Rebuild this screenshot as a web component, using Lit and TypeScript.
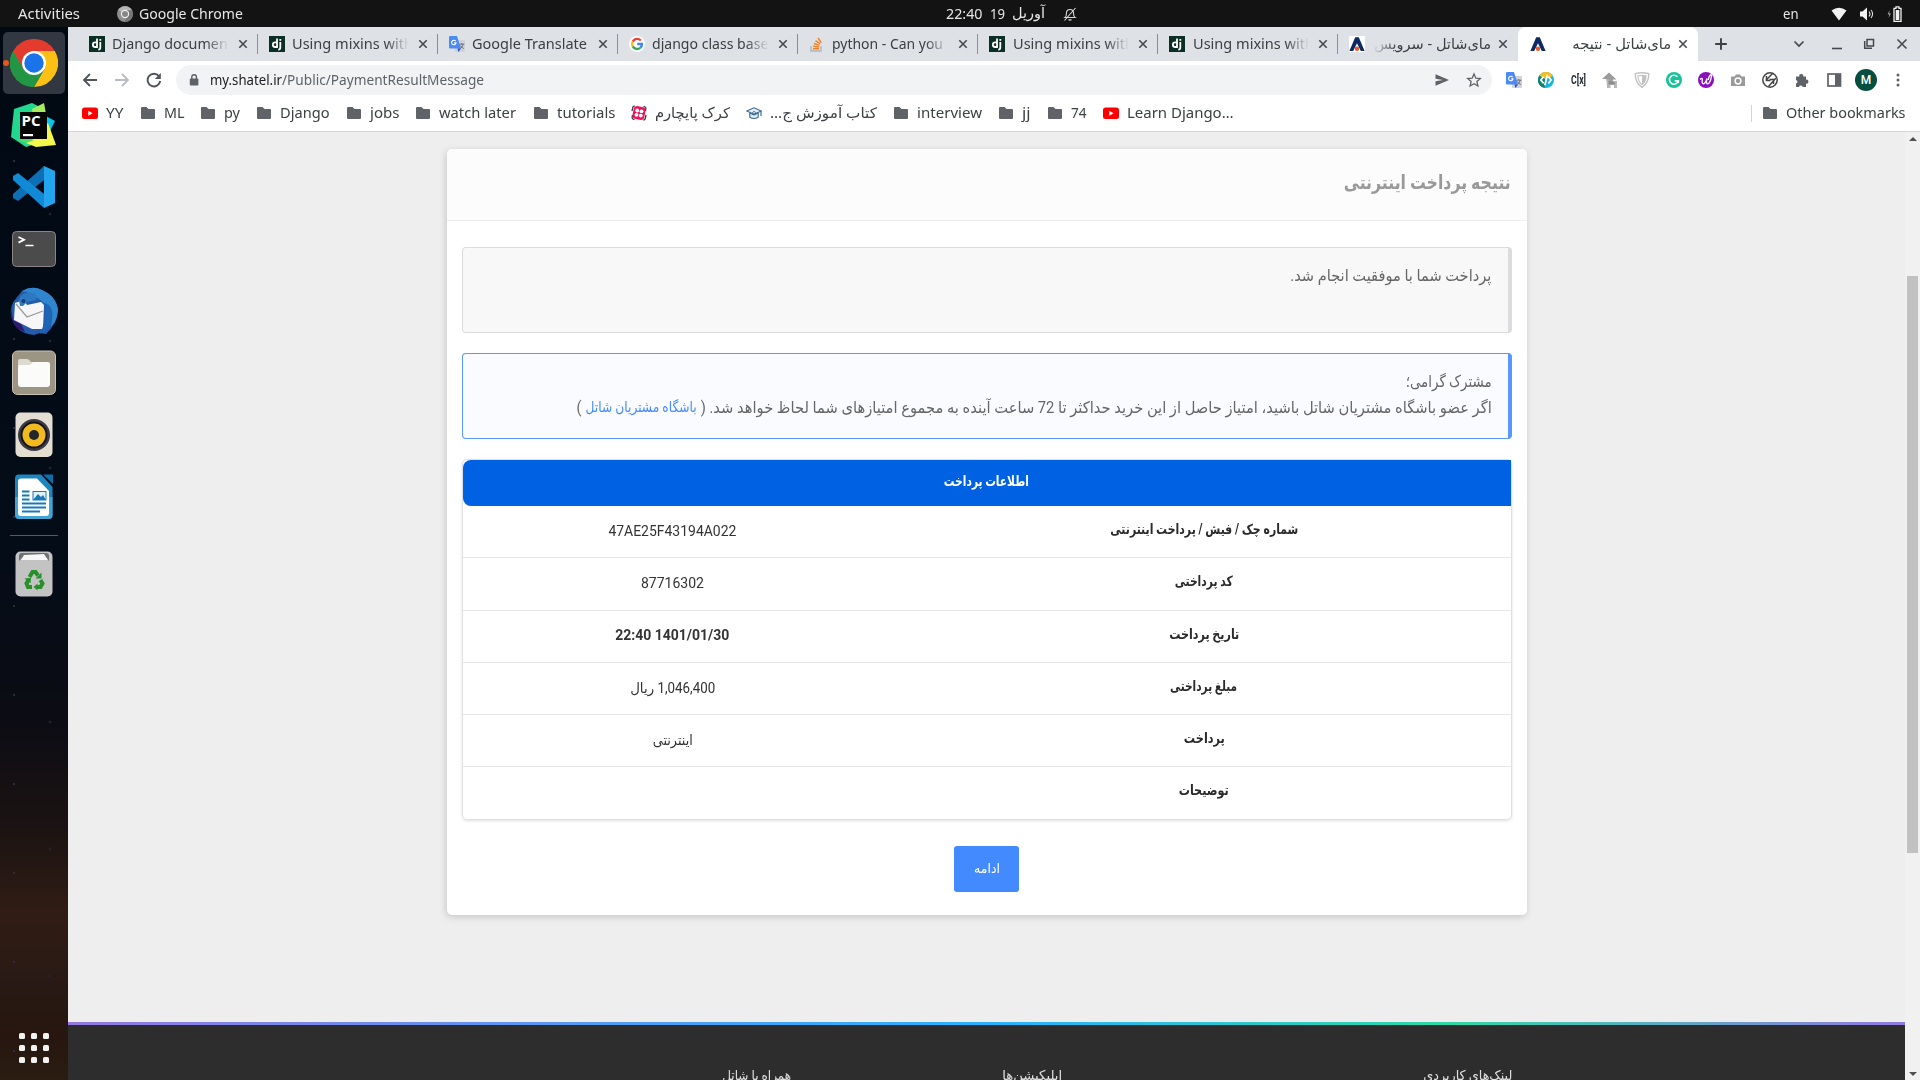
import { LitElement, html, svg, css, nothing } from "lit";
import { customElement } from "lit/decorators.js";
import { styleMap } from "lit/directives/style-map.js";

/** Text laid out in a box of a known width; the glyph run is scaled to fill it. */
@customElement("fit-text")
class FitText extends LitElement {
  static properties = { w: { type: Number }, rtl: { type: Boolean } };
  declare w: number;
  declare rtl: boolean;
  static styles = css`
    :host { display: block; flex: none; white-space: nowrap; }
    .box { display: flex; }
    .run { display: block; flex: none; transform-origin: left center; }
    .rtl { direction: rtl; }
    .rtl .run { transform-origin: right center; }
  `;
  firstUpdated() {
    const run = this.renderRoot.querySelector(".run") as HTMLElement;
    const natural = run.getBoundingClientRect().width;
    if (natural > 0) run.style.transform = `scaleX(${this.w / natural})`;
  }
  render() {
    return html`<div class="box ${this.rtl ? "rtl" : ""}" style=${styleMap({ width: this.w + "px" })}>
      <span class="run"><slot></slot></span></div>`;
  }
}

const fit = (text: string, w: number, rtl = false) => html`<fit-text .w=${w} .rtl=${rtl}>${text}</fit-text>`;
const icon = (body: unknown, size = 16, box = 16) =>
  html`<svg class="ic" width=${size} height=${size} viewBox="0 0 ${box} ${box}">${body}</svg>`;

/* favicons */
const dj = icon(svg`<rect width="16" height="16" fill="#0c2f24"/><g fill="none" stroke="#fff" stroke-width="1.8"><path d="M8 2.6V11H6.2a2.3 2.3 0 0 1 0-4.6H8"/><path d="M11.3 6v5.4q0 2-2 2.2"/></g><rect x="10.4" y="3" width="1.8" height="1.8" fill="#fff"/>`);
const translate = icon(svg`<rect x="6" y="4" width="10" height="12" rx="1" fill="#cfd3d8"/><path d="M1 0h7l4 12.500H1a1 1 0 0 1-1-1V1a1 1 0 0 1 1-1z" fill="#4a8af4"/><path d="M8.500 12.500H12L9.500 16z" fill="#2a4fc4"/><path d="M6.600 5.200A2.200 2.200 0 1 0 7 6.900H5.200" fill="none" stroke="#fff" stroke-width="1.100"/><path d="M10.500 8.200h4.800M12.800 7v1.200M14.300 8.300q-.8 2.800-3 4.300M11.600 9.600q1 2 3.200 3" stroke="#667" stroke-width=".9" fill="none"/>`);
const google = icon(svg`<circle cx="8" cy="8" r="8" fill="#fff"/><g fill="none" stroke-width="2.300"><path d="M11.800 4.500A5 5 0 0 0 3.700 5.600" stroke="#ea4335"/><path d="M3.700 5.600a5 5 0 0 0 0 4.800" stroke="#fbbc05"/><path d="M3.700 10.400a5 5 0 0 0 7.600 1.400" stroke="#34a853"/><path d="M11.300 11.800A5 5 0 0 0 13 8H8.200" stroke="#4285f4"/></g>`);
const stack = icon(svg`<path d="M2 10v5h10v-5" fill="none" stroke="#b3b5b8" stroke-width="1.400"/><g stroke="#f48024" stroke-width="1.400"><path d="M4 12.700h6M4.100 10.300l5.900.7M4.900 7.500l5.500 1.900M6.500 4.600l4.700 3.300M9 2l3.300 4.600"/></g>`);
const shatel = (bg: boolean) => icon(svg`${bg ? svg`<rect width="16" height="16" fill="#fff"/>` : nothing}<path d="M6.200 1.200h3.600L15.600 15h-3.800L8 7.200 4.200 15H.4z" fill="#0d2a63"/><circle cx="8" cy="12.800" r="2.200" fill="#f15a24"/>`);
const cross = icon(svg`<path d="M4.300 4.300l7.400 7.400M11.700 4.300l-7.400 7.400" stroke="#45494d" stroke-width="1.600"/>`);

/* bookmarks */
const folder = icon(svg`<path d="M1 3a1 1 0 0 1 1-1h4.500l2 2H14a1 1 0 0 1 1 1v8a1 1 0 0 1-1 1H2a1 1 0 0 1-1-1z" fill="#5f6368"/>`);
const youtube = icon(svg`<rect y="2.500" width="16" height="11.500" rx="2.500" fill="#f00"/><path d="M6.300 5.800v5L10.600 8.300z" fill="#fff"/>`);
const aparat = icon(svg`<g fill="none" stroke="#3b3b44" stroke-width="1.300"><path d="M1 6L1.800 2.500q.4-1.600 2-1.300M12.500 1.400q2.800.6 2.300 2.600L14.500 6M15 10l-.8 3.500q-.4 1.600-2 1.300M3.500 14.600Q.7 14 1.200 12L1.500 10"/></g><rect x="2" y="1.500" width="12" height="13" rx="4" transform="rotate(12 8 8)" fill="#ed145b"/><g fill="#fff"><circle cx="6.200" cy="5.500" r="1.900"/><circle cx="10.500" cy="6.300" r="1.900"/><circle cx="5.500" cy="9.800" r="1.900"/><circle cx="9.800" cy="10.600" r="1.900"/></g>`);
const cap = icon(svg`<path d="M.8 6L8 2.800 15.200 6 8 9.200z" fill="#e8f1f8" stroke="#3a6b96" stroke-width="1.100"/><path d="M3.800 8v4.200q4.200 2.600 8.400 0V8L8 9.800z" fill="#dce9f3" stroke="#3a6b96" stroke-width="1.100"/><path d="M15 6v5" stroke="#3a6b96" stroke-width="1.200"/><circle cx="8" cy="8" r="1.500" fill="none" stroke="#3a6b96" stroke-width=".8"/>`);

/* toolbar */
const back = icon(svg`<path d="M15 8H2M8 2L2 8l6 6" fill="none" stroke="#50545a" stroke-width="1.800"/>`);
const fwd = icon(svg`<path d="M1 8h13M8 2l6 6-6 6" fill="none" stroke="#b9bbbe" stroke-width="1.800"/>`);
const reload = icon(svg`<path d="M13 4.300A6.300 6.300 0 1 0 14.200 9" fill="none" stroke="#50545a" stroke-width="1.900"/><path d="M14.800 1v6h-6z" fill="#50545a"/>`);
const lock = icon(svg`<rect x="3.800" y="6.500" width="8.600" height="7" rx="1" fill="#5f6368"/><path d="M5.800 7V5a2.300 2.300 0 0 1 4.600 0v2" fill="none" stroke="#5f6368" stroke-width="1.400"/>`);
const send = icon(svg`<path d="M1.500 2.300L15 8 1.500 13.700V9.200L9 8 1.500 6.800z" fill="#5f6368"/>`);
const star = icon(svg`<path d="M8 2l1.800 4.200 4.500.4-3.400 3 1 4.400L8 11.700 4.100 14l1-4.400-3.400-3 4.500-.4z" fill="none" stroke="#5f6368" stroke-width="1.300"/>`);
const ring = icon(svg`<circle cx="8" cy="8" r="8" fill="#18b6de"/><path d="M1 4A8 8 0 0 1 15 4L8 7z" fill="#f8bd1d"/><path d="M1.300 3.600A8 8 0 0 0 6.500 15.900L8 8z" fill="#12806f"/><path d="M5.600 4.600L2.900 8l2.700 3.400M10.400 4.600L13.100 8l-2.700 3.400M9.300 2.800L6.800 13.200" stroke="#fff" stroke-width="1.700" fill="none"/>`);
const home = icon(svg`<path d="M7 .5L14.500 7.500H11V9H4.500V7H0z" fill="#9c9c9c"/><path d="M4.500 7l8 2h2.500v7h-3v-3H8.500v3H5z" fill="#b8b8b8"/><path d="M6.500 8.500h3l3.500 2.500v1.500H6.500z" fill="#8c8c8c"/>`);
const shield = icon(svg`<path d="M1.200 1.700Q8-.2 14.800 1.700 14.800 11 8 15.400 1.200 11 1.200 1.700z" fill="#fff" stroke="#c2c2c2" stroke-width="1.400"/><path d="M4 3.800q4-1 8 0 .2 5.600-4 9-4.200-3.400-4-9z" fill="none" stroke="#c6c6c6" stroke-width="1.200"/><path d="M8 3.400q2 0 4 .5.200 5.500-4 9z" fill="#c2c2c2"/>`);
const grammarly = icon(svg`<circle cx="8" cy="8" r="8" fill="#15c39a"/><path d="M11.400 4.800A4.500 4.500 0 1 0 12.300 8.900H8.700M12.300 8.500v2.600" fill="none" stroke="#fff" stroke-width="1.600"/>`);
const purple = icon(svg`<circle cx="8" cy="8" r="8" fill="#8a10bd"/><path d="M2 7.500q2.500-2.500 2.300.3-.6 4 1 4 2.200-.3 3.700-5.300-1.200 5.300.5 5.300 2.800-.3 4-8 0-1.500-1.200-.8-1.700 1.800-2 5" fill="none" stroke="#fff" stroke-width="1.300"/>`);
const camera = icon(svg`<path d="M1 4.500h3.500L6 2.500h4l1.500 2H15V14H1z" fill="#9a9a9a"/><circle cx="8" cy="9" r="2.900" fill="none" stroke="#fff" stroke-width="1.500"/>`);
const slash = icon(svg`<circle cx="8" cy="8" r="7.200" fill="#fff" stroke="#444" stroke-width="1.500"/><g fill="none" stroke="#444" stroke-width="1.500"><path d="M10.500 1.500L3.800 8.500M14 6l-7.500 8.500M4.500 4v4.500h4M11.500 12V7.500h-4"/></g>`);
const puzzle = icon(svg`<path d="M2 4.500h3.300a2 2 0 1 1 3.900 0H12v3.200a2 2 0 1 1 0 3.900V15H8.700a1.900 1.900 0 0 0-3.700 0H2v-3.400a1.900 1.900 0 0 0 0-3.700z" fill="#5f6368"/>`);
const panel = icon(svg`<rect x="2" y="2" width="12.500" height="12" fill="#fff" stroke="#5f6368" stroke-width="1.700"/><rect x="9" y="2" width="5.500" height="12" fill="#5f6368"/>`);
const dots = icon(svg`<g fill="#5f6368"><circle cx="8" cy="3" r="1.500"/><circle cx="8" cy="8" r="1.500"/><circle cx="8" cy="13" r="1.500"/></g>`);

/* window controls */
const plus = icon(svg`<path d="M8 2.200v11.600M2.200 8h11.600" stroke="#3c4043" stroke-width="1.900"/>`);
const chevron = icon(svg`<path d="M3.500 5.500L8 10l4.500-4.500" fill="none" stroke="#45494d" stroke-width="1.700"/>`);
const minimize = icon(svg`<path d="M3 12.500h10" stroke="#45494d" stroke-width="1.600"/>`);
const restore = icon(svg`<rect x="6" y="3.500" width="6.500" height="6.500" fill="none" stroke="#45494d" stroke-width="1.500"/><path d="M3.700 5v7.300H11" fill="none" stroke="#45494d" stroke-width="1.500"/>`);
const closeWin = icon(svg`<path d="M3.500 3.500l9 9M12.500 3.500l-9 9" stroke="#45494d" stroke-width="1.600"/>`);

/* system tray */
const chromeGrey = icon(svg`<circle cx="8" cy="8" r="8" fill="#8e8e8e"/><path d="M8 8L1.200 4A8 8 0 0 1 15 4.500H8z" fill="#b5b5b5"/><path d="M11 9.500L7.500 16A8 8 0 0 0 15 4.500H9z" fill="#747474"/><circle cx="8" cy="8" r="3.600" fill="#888" stroke="#eee" stroke-width="1.200"/>`);
const bell = icon(svg`<path d="M3 11.500q1.500-1 1.500-4.500a3.500 3.500 0 0 1 7 0q0 3.500 1.500 4.500zM6.500 13.500q1.500 1.200 3 0M2.500 14.500L13.500 2" fill="none" stroke="#d8d8d8" stroke-width="1.100"/>`);
const wifi = icon(svg`<path d="M.5 4.500Q8 -1 15.500 4.500L8 14.500z" fill="#f2f2f2"/>`);
const volume = icon(svg`<path d="M1 5.500h2.500L8 1.500v13l-4.500-4H1z" fill="#f2f2f2"/><path d="M10 5.500q2 2.500 0 5M12 4q3.200 4 0 8" fill="none" stroke="#ddd" stroke-width="1.100"/>`);
const battery = icon(svg`<path d="M2.500 4L.6 8.500h1.700L1.500 12 4 7.500H2.300z" fill="#999"/><path d="M9 .8h3v1.500h2V15.500H7V2.300h2z" fill="none" stroke="#f2f2f2" stroke-width="1.300"/><rect x="8.700" y="4" width="3.600" height="10" fill="#f2f2f2"/>`);

/* dock */
const dChrome = icon(svg`<path d="M24 24L24 48A24 24 0 0 1 3.200 12z" fill="#34a853"/><path d="M24 12h20.800a24 24 0 0 1-20.800 36l10.400-18z" fill="#fcc014"/><path d="M34.400 30L24 48A24 24 0 0 1 3.200 12l10.400 18z" fill="#229645"/><path d="M3.200 12A24 24 0 0 1 44.800 12H24L13.600 30z" fill="#e33b2e"/><circle cx="24" cy="24" r="12" fill="#fff"/><circle cx="24" cy="24" r="9.700" fill="#1a73e8"/>`, 48, 48);
const dPyCharm = icon(svg`<path d="M4 8L22 2l12 6-6 34-12 4L1 36z" fill="#22d88f"/><path d="M22 8L34 2l4 22-14 6z" fill="#a6ec5e"/><path d="M34 14l11 6-6 12-6-6z" fill="#0bc4ea"/><path d="M38 22l8 22-20 2-10-4z" fill="#f4f84c"/><path d="M16 42l-8-3 6-4 10 4z" fill="#4fdc6b"/><rect x="10" y="11" width="27" height="27" fill="#060606"/><text x="11.500" y="25" class="pc">PC</text><rect x="13" y="33" width="10" height="2.200" fill="#fff"/>`, 48, 48);
const dCode = icon(svg`<path d="M34 3L3 31v4l5 3L34 17z" fill="#0d6fb5"/><path d="M34 45L3 17v-4l5-3 26 21z" fill="#1289d4"/><path d="M34 3l11 5v32l-11 5z" fill="#23a4ee"/>`, 48, 48);
const dTerm = icon(svg`<rect x="2.500" y="6.500" width="43" height="35" rx="4" fill="#4b4b4b" stroke="#8b8585"/><path d="M8.500 12l5.500 2.800-5.500 2.800" fill="none" stroke="#fff" stroke-width="1.800"/><path d="M15.500 20.500h8" stroke="#fff" stroke-width="1.500"/>`, 48, 48);
const dBird = icon(svg`<path d="M12 4Q22-2 32 3q14 6 16 20-1 14-12 24l-6-1-6 2Q4 46 1 28 0 20 4 14z" fill="#245bab"/><path d="M12 4Q22-2 32 3q14 6 16 20-1 13-8 17l2-8-6 6 1-18Q26 6 12 4z" fill="#2f86cf"/><path d="M1 20Q0 34 8 42l7 3-4-8-8-4z" fill="#30186d"/><path d="M5 16l9-3 3 5 14-3 3 3-1 24-11 0L4 33z" fill="#f6f6f8"/><path d="M6 17l11 13 16-6" fill="none" stroke="#999" stroke-width="1.200"/><path d="M9 13q2-9 15-7 5 3 2 7l-9 2-4 4-3 0z" fill="#2c79c2"/><path d="M34 16q4 14-4 31l6-3 2-5 3 1 1-8q2-14-8-16z" fill="#1d64b4"/><circle cx="13.500" cy="14" r="2" fill="#193c70"/>`, 48, 48);
const dFiles = icon(svg`<rect x="2.500" y="2" width="43" height="43.500" rx="5" fill="#9d9583" stroke="#c9c3b5"/><path d="M8 17V12q0-2 2-2h7q2 0 4 3h4v8z" fill="#dedad0"/><path d="M8 18q0-2 2-2h9q2 0 4-3h15q2 0 2 2v20q0 3-3 3H11q-3 0-3-3z" fill="#fbfbfa"/>`, 48, 48);
const dMusic = icon(svg`<rect x="5.500" y="1.500" width="37" height="44.500" rx="5" fill="#e3ddd2"/><circle cx="24" cy="24" r="16" fill="#3a3a45"/><circle cx="24" cy="24" r="12.500" fill="#f1bb1f" stroke="#141418" stroke-width="2"/><circle cx="24" cy="24" r="5" fill="#24262a"/>`, 48, 48);
const dWriter = icon(svg`<path d="M9 1.500h22L42.500 14v28q0 4-4 4H9q-4 0-4-4V5.500q0-4 4-4z" fill="#1d86bf"/><path d="M5 24h37.500v18q0 4-4 4H9q-4 0-4-4z" fill="#43a5d4"/><path d="M11 5.500h16L39 18v22q0 3-3 3H11q-3 0-3-3V8.500q0-3 3-3z" fill="#fff"/><path d="M33 1.500h10V11z" fill="#0c6fa8"/><g stroke="#1779b5" stroke-width="2"><path d="M12 18.500h7.500M12 22.500h7.500M12 26.500h7.500M12 30.500h24M12 34.500h24M12 38.500h18"/></g><rect x="23" y="18.500" width="13" height="8.500" fill="#dff1fb" stroke="#1779b5"/><path d="M23 27l5-6 3 3 2-2 3 5z" fill="#1779b5"/>`, 48, 48);
const dTrash = icon(svg`<rect x="5.500" y="1.500" width="37" height="45" rx="5" fill="#c3c3c3"/><path d="M9 11V6q0-3 3-3h24q3 0 3 3v5l-3-3H12z" fill="#707070"/><path d="M11 10l3-5 20-1 4 6z" fill="#f7f7f7"/><g fill="none" stroke="#27902a" stroke-width="4"><path d="M19.500 27l3-5h3l2.500 3.500"/><path d="M30.500 30l2 3.500-2 3.500h-4"/><path d="M22 37h-4l-1.500-3.500 2-3.500"/></g><path d="M31.500 22.500v6h-6zM27.500 40.500v-7l-4 3.500zM14.500 28.500l6.500-.8-.5 5.500z" fill="#27902a"/>`, 48, 48);

const tabs: { icon: unknown; title: string; w: number; rtl?: boolean; fade?: boolean; active?: boolean }[] = [
  { icon: dj, title: "Django document", w: 121, fade: true },
  { icon: dj, title: "Using mixins with", w: 121, fade: true },
  { icon: translate, title: "Google Translate", w: 115 },
  { icon: google, title: "django class based", w: 125, fade: true },
  { icon: stack, title: "python - Can you", w: 111, fade: true },
  { icon: dj, title: "Using mixins with", w: 121, fade: true },
  { icon: dj, title: "Using mixins with", w: 121, fade: true },
  { icon: shatel(true), title: "مای‌شاتل - سرویس", w: 117, rtl: true, fade: true },
  { icon: shatel(false), title: "مای‌شاتل - نتیجه", w: 99, rtl: true, active: true },
];

const bookmarks: [unknown, string, number, boolean?][] = [
  [youtube, "YY", 17.5], [folder, "ML", 20.5], [folder, "py", 16], [folder, "Django", 49.5], [folder, "jobs", 29.5],
  [folder, "watch later", 77], [folder, "tutorials", 58.5], [aparat, "کرک پایچارم", 75, true], [cap, "کتاب آموزش ج...", 107, true],
  [folder, "interview", 65], [folder, "jj", 8.5], [folder, "74", 15.5], [youtube, "Learn Django…", 106.5],
];

const rows: [string, number, string, number, string?][] = [
  ["شماره چک / فیش / پرداخت اینترنتی", 188, "47AE25F43194A022", 128],
  ["کد پرداختی", 58, "87716302", 63],
  ["تاریخ پرداخت", 70, "1401/01/30 22:40", 114, "strong"],
  ["مبلغ پرداختی", 67, "1,046,400 ریال", 85],
  ["پرداخت", 41, "اینترنتی", 40],
  ["توضیحات", 50, "", 0],
];

@customElement("app-root")
class AppRoot extends LitElement {
  static styles = css`
    :host { display: flex; flex-direction: column; width: 1920px; height: 1080px; overflow: hidden;
      font-family: "Noto Sans", "DejaVu Sans", sans-serif; font-size: 14.5px; color: #3c4043; box-sizing: border-box; }
    *, *::before, *::after { box-sizing: border-box; }
    .ic { display: block; flex: none; }
    .pc { font: 700 15px "Open Sans", sans-serif; fill: #fff; }

    .top { height: 27px; flex: none; background: #131313; color: #e6e6e6; display: grid; grid-template-columns: 946px auto 1fr; align-items: center; line-height: 27px; }
    .top > div { display: flex; align-items: center; }
    .top .l { padding-left: 18px; }
    .top .l .ic { margin: 0 6px 0 37px; }
    .top .c { gap: 7.500px; }
    .top .c .ic { margin-left: 9px; }
    .top .c :nth-child(3) { margin-top: -3px; }
    .top .r { justify-content: flex-end; padding-right: 17px; }
    .top .r .ic:nth-of-type(1) { margin: 0 12px 0 33px; }
    .top .r .ic:nth-of-type(2) { margin-right: 12px; }

    .desk { flex: 1; display: flex; min-height: 0; }
    .dock { width: 68px; flex: none; display: flex; flex-direction: column; align-items: center; padding-top: 5px;
      background: radial-gradient(circle at 14px 45px, #26303c 0 .8px, transparent 1.4px) 0 0/67px 89px,
        radial-gradient(circle at 50px 60px, #1d2733 0 1px, transparent 1.7px) 0 0/83px 127px,
        linear-gradient(#010913, #020b16 30%, #040c18 50%, #0c0c14 66%, #1b1312 76%, #301c14 84%, #2a1a15 90%, #26160f 96%, #2b1d12); }
    .app { width: 62px; height: 62px; display: flex; align-items: center; justify-content: center; position: relative; }
    .app.on { background: #313841; border-radius: 5px; }
    .app.on::before { content: ""; position: absolute; left: -0.500px; top: 28px; width: 6px; height: 6px; border-radius: 50%; background: #e95420; }
    .rule { width: 48px; height: 1px; background: #555a60; margin: 7px 0; }
    .grid { margin-top: auto; margin-bottom: 17px; display: grid; grid-template-columns: repeat(3, 6px); gap: 6px; }
    .grid i { width: 6px; height: 6px; border-radius: 1.500px; background: #f2f2f2; }

    .win { flex: 1; min-width: 0; display: flex; flex-direction: column; background: #fff; }
    .tabs { height: 34px; flex: none; background: #dee1e6; display: flex; padding-left: 9.600px; }
    .tab { width: 180.100px; flex: none; display: flex; align-items: center; padding: 0 7px 0 11px; gap: 8px; position: relative; }
    .tab::after { content: ""; position: absolute; right: 0; top: 7px; height: 20px; width: 1px; background: #8a8d91; }
    .title { flex: 1; overflow: hidden; display: flex; line-height: 32px; height: 34px; margin: 0 -2px 0 -0.500px; }
    .title.rtl { justify-content: flex-end; margin: 0 -3.500px 0 0; }
    .title.fade { mask-image: linear-gradient(90deg, #000 80%, transparent 100%); }
    .title.rtl.fade { mask-image: linear-gradient(270deg, #000 80%, transparent 100%); }
    .tab:nth-child(8)::after, .tab.active::after { display: none; }
    .tab.active { background: #fff; border-radius: 8px 8px 0 0; padding-left: 12px; }
    .new { margin: 9px 0 0 14.500px; }
    .ctl { margin: 9px 10.500px 0 auto; display: flex; }
    .ctl .ic:nth-child(1) { margin-right: 22.500px; }
    .ctl .ic:nth-child(2) { margin-right: 16px; }
    .ctl .ic:nth-child(3) { margin-right: 16.500px; }

    .bar { height: 38px; flex: none; display: flex; align-items: center; padding: 0 14px 0 14px; }
    .nav { display: flex; gap: 16px; margin-right: 14px; }
    .omni { width: 1316px; height: 30px; border-radius: 15px; background: #f1f3f4; display: flex; align-items: center; padding: 0 10px; line-height: 26px; font-size: 14px; }
    .omni > .ic:first-child { margin-right: 8px; }
    .host { color: #202124; }
    .path { color: #5f6368; }
    .omni .send { margin: 0 16px 0 auto; }
    .ext { display: flex; gap: 16px; margin-left: 14px; align-items: center; }
    .cx { width: 16px; font: 700 12px/16px Roboto, sans-serif; color: #1e2430; }
    .cx fit-text { margin-left: 1px; }
    .me { width: 22px; height: 22px; margin: 0 -3px; border-radius: 50%; background: #064e3f; color: #fff; font: 500 12px/22px Roboto, sans-serif; text-align: center; }

    .marks { height: 33px; flex: none; display: flex; align-items: center; gap: 16.100px; padding: 0 15px 4px 14px; border-bottom: 1px solid #d8d8d8; line-height: 24px; }
    .marks > div { display: flex; align-items: center; gap: 8px; }
    .marks fit-text { margin-top: -2px; }
    .marks .other { margin-left: auto; border-left: 1px solid #d0d3d7; padding-left: 10px; height: 17px; }

    .view { flex: 1; min-height: 0; display: flex; }
    .page { flex: 1; min-width: 0; background: #eee; display: flex; flex-direction: column; align-items: center; direction: rtl; overflow: hidden;
      font-family: Roboto, "DejaVu Sans", sans-serif; }
    .card { width: 1080px; height: 766px; flex: none; margin-top: 17px; background: #fff; border-radius: 5px; box-shadow: -1px 2px 7px rgba(0,0,0,.17); display: flex; flex-direction: column; }
    .head { height: 72px; flex: none; background: #fcfcfc; border-bottom: 1px solid #eee; border-radius: 5px 5px 0 0; padding: 16px 15.500px 0; font: 700 19.500px/36px Roboto, "DejaVu Sans", sans-serif; color: #999; }
    .body { flex: 1; padding: 26px 15px 0; display: flex; flex-direction: column; gap: 20px; }
    .note { height: 86px; flex: none; border: 1px solid #dcdce0; border-right-width: 4px; border-radius: 4px; background: #f8f8f8; padding: 15px 16px; font-size: 16px; line-height: 25.500px; color: #666; }
    .note.blue { border-color: #5a96ff; background: #fafbff; }
    .line { display: flex; gap: 4px; }
    .link { color: #448aff; font-size: 14.500px; }
    .tbl { flex: none; border: 1px solid #dfe0e2; border-radius: 5px; box-shadow: 0 1px 3px rgba(0,0,0,.12); }
    .th { height: 46px; background: #0061e2; color: #fff; border-radius: 8px 0 0 8px; display: flex; justify-content: center; font-weight: 700; font-size: 14px; line-height: 42px; }
    .row { height: 52.300px; display: grid; grid-template-columns: 613px 1fr; border-bottom: 1px solid #e6e6e6; }
    .row:last-child { border-bottom: 0; height: 51.500px; }
    .k { display: flex; justify-content: center; font-weight: 700; font-size: 14px; line-height: 46.500px; color: #2a2a2a; }
    .v { display: flex; justify-content: center; padding-right: 15px; font-size: 14px; line-height: 50px; color: #333; }
    .v.strong { font-weight: 700; line-height: 49px; }
    .btn { align-self: center; width: 65px; height: 46px; margin-top: 6px; border-radius: 3px; background: #448aff; color: #fff; display: flex; justify-content: center; font-size: 13.500px; line-height: 44px; }
    .foot { width: 100%; height: 58px; flex: none; margin-top: auto; background: #2d2d2d; color: #e0e0e0; font-size: 13.500px; }
    .stripe { height: 3px; background: linear-gradient(90deg, #9278e0, #29b0ff 50%, #2ed8a5 75%, #9278e0); }
    .links { display: flex; padding: 38px 393px 0 0; line-height: 24px; }
    .links :nth-child(2) { margin-right: 361px; }
    .links :nth-child(3) { margin-right: 211px; }

    .scroll { width: 15px; flex: none; background: #f1f1f1; display: flex; flex-direction: column; align-items: center; padding: 5px 0 4px; }
    .up, .dn { width: 0; height: 0; border: 4px solid transparent; flex: none; }
    .up { border-top: 0; border-bottom: 4px solid #505050; }
    .dn { border-bottom: 0; border-top: 4px solid #505050; margin-top: auto; }
    .thumb { width: 11px; height: 577px; background: #c1c1c1; margin-top: 135px; }
  `;

  render() {
    return html`
      <div class="top">
        <div class="l">${fit("Activities", 62)}${chromeGrey}${fit("Google Chrome", 104)}</div>
        <div class="c">${fit("22:40", 36.5)}${fit("19", 15)}${fit("آوریل", 33, true)}${bell}</div>
        <div class="r">${fit("en", 15.5)}${wifi}${volume}${battery}</div>
      </div>
      <div class="desk">
        <div class="dock">
          <div class="app on">${dChrome}</div>
          ${[dPyCharm, dCode, dTerm, dBird, dFiles, dMusic, dWriter].map((i) => html`<div class="app">${i}</div>`)}
          <div class="rule"></div>
          <div class="app">${dTrash}</div>
          <div class="grid">${Array.from({ length: 9 }, () => html`<i></i>`)}</div>
        </div>
        <div class="win">
          <div class="tabs">
            ${tabs.map((t) => html`<div class="tab ${t.active ? "active" : ""}">${t.icon}
              <div class="title ${t.rtl ? "rtl" : ""} ${t.fade ? "fade" : ""}">${fit(t.title, t.w, !!t.rtl)}</div>${cross}</div>`)}
            <div class="new">${plus}</div>
            <div class="ctl">${chevron}${minimize}${restore}${closeWin}</div>
          </div>
          <div class="bar">
            <div class="nav">${back}${fwd}${reload}</div>
            <div class="omni">${lock}<span class="host">${fit("my.shatel.ir", 72)}</span><span class="path">${fit("/Public/PaymentResultMessage", 202)}</span>
              <span class="send">${send}</span>${star}</div>
            <div class="ext">${translate}${ring}<span class="cx">${fit("C[x]", 15)}</span>${home}${shield}${grammarly}${purple}${camera}${slash}${puzzle}${panel}
              <span class="me">M</span>${dots}</div>
          </div>
          <div class="marks">
            ${bookmarks.map(([i, t, w, r]) => html`<div>${i}${fit(t, w, !!r)}</div>`)}
            <div class="other">${folder}${fit("Other bookmarks", 119.5)}</div>
          </div>
          <div class="view">
            <div class="page">
              <div class="card">
                <div class="head">${fit("نتیجه پرداخت اینترنتی", 167, true)}</div>
                <div class="body">
                  <div class="note">${fit("پرداخت شما با موفقیت انجام شد.", 201, true)}</div>
                  <div class="note blue">
                    ${fit("مشترک گرامی؛", 86, true)}
                    <div class="line">${fit("اگر عضو باشگاه مشتریان شاتل باشید، امتیاز حاصل از این خرید حداکثر تا 72 ساعت آینده به مجموع امتیازهای شما لحاظ خواهد شد. (", 791, true)}
                      <span class="link">${fit("باشگاه مشتریان شاتل", 111, true)}</span>${fit(")", 5, true)}</div>
                  </div>
                  <div class="tbl">
                    <div class="th">${fit("اطلاعات پرداخت", 85, true)}</div>
                    ${rows.map(([k, kw, v, vw, c]) => html`<div class="row"><div class="k">${fit(k, kw, true)}</div>
                      <div class="v ${c ?? ""}">${v ? fit(v, vw, true) : nothing}</div></div>`)}
                  </div>
                  <div class="btn">${fit("ادامه", 26, true)}</div>
                </div>
              </div>
              <div class="foot"><div class="stripe"></div>
                <div class="links">${fit("لینک‌های کاربردی", 89, true)}${fit("اپلیکیشن‌ها", 60, true)}${fit("همراه با شاتل", 69, true)}</div>
              </div>
            </div>
            <div class="scroll"><div class="up"></div><div class="thumb"></div><div class="dn"></div></div>
          </div>
        </div>
      </div>`;
  }
}
